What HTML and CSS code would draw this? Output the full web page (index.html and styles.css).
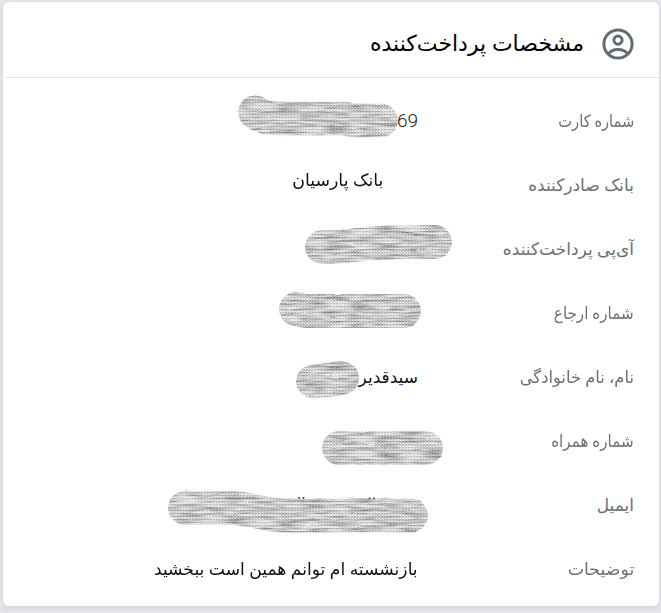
FILE: index.html
```html
<!DOCTYPE html>
<html lang="fa" dir="rtl">
<head>
    <meta charset="UTF-8">
    <title>مشخصات پرداخت‌کننده</title>
    <link rel="stylesheet" href="styles.css">
</head>
<body>
    <svg class="defs" width="0" height="0">
        <defs>
            <pattern id="dots" width="3" height="3" patternUnits="userSpaceOnUse">
                <rect width="3" height="3" fill="#d2d2d2"/>
                <rect width="2" height="1" fill="#a2a2a2"/>
                <rect x="1" y="2" width="1" height="1" fill="#f8f8f8"/>
            </pattern>
            <filter id="scratch" filterUnits="userSpaceOnUse" x="110" y="80" width="360" height="520" color-interpolation-filters="sRGB">
                <feTurbulence type="fractalNoise" baseFrequency="0.04 0.35" numOctaves="3" seed="4" result="noise"/>
                <feColorMatrix in="noise" type="matrix" values="2 0 0 0 -0.25  2 0 0 0 -0.25  2 0 0 0 -0.25  0 0 0 0 1" result="gray"/>
                <feDisplacementMap in="SourceGraphic" in2="noise" scale="2" xChannelSelector="R" yChannelSelector="G" result="rough"/>
                <feComposite in="rough" in2="gray" operator="arithmetic" k1="0" k2="0.7" k3="0.3" k4="0" result="mix"/>
                <feComposite in="mix" in2="rough" operator="in"/>
            </filter>
        </defs>
    </svg>

    <div class="card">
        <div class="card-header">
            <svg class="user-icon" viewBox="0 0 32 32">
                <circle cx="16" cy="16" r="14.1"/>
                <circle cx="16" cy="12.1" r="4.1"/>
                <path d="M6.2 26 C10.5 20 21.5 20 25.8 26"/>
            </svg>
            <h2>مشخصات پرداخت‌کننده</h2>
        </div>
        <div class="rows">
            <div class="row">
                <div class="label"><span class="narrow">شماره کارت</span></div>
                <div class="value">
                    <span class="digits">69</span>
                    <svg class="scribble" viewBox="118 89 340 64"><path d="M255 112 C263 119 272 118.500 287 118.500 H345 L352 120.500 H381"/></svg>
                </div>
            </div>
            <div class="row">
                <div class="label"><span>بانک صادرکننده</span></div>
                <div class="value bank"><span class="wide">بانک پارسیان</span></div>
            </div>
            <div class="row">
                <div class="label"><span>آی‌پی پرداخت‌کننده</span></div>
                <div class="value">
                    <svg class="scribble" viewBox="118 217 340 64"><path d="M322 247 C345 248 365 242.500 390 242.500 L435 242"/></svg>
                </div>
            </div>
            <div class="row">
                <div class="label"><span class="narrow mid">شماره ارجاع</span></div>
                <div class="value">
                    <svg class="scribble" viewBox="118 281 340 64"><path d="M296 309 L305 311 H404"/></svg>
                </div>
            </div>
            <div class="row">
                <div class="label"><span class="slim">نام، نام خانوادگی</span></div>
                <div class="value">
                    <span>سیدقدیر</span>
                    <svg class="scribble" viewBox="118 345 340 64"><path d="M313 381.500 L342 378"/></svg>
                </div>
            </div>
            <div class="row">
                <div class="label"><span class="narrow mid">شماره همراه</span></div>
                <div class="value">
                    <svg class="scribble" viewBox="118 409 340 64"><path d="M339 448 H426"/></svg>
                </div>
            </div>
            <div class="row">
                <div class="label"><span>ایمیل</span></div>
                <div class="value">
                    <svg class="scribble" viewBox="118 473 340 64">
                        <g class="specks">
                            <circle cx="299" cy="498" r="1"/>
                            <circle cx="303.500" cy="498" r="1"/>
                            <circle cx="369.500" cy="498.500" r="1"/>
                            <circle cx="374" cy="498.500" r="1"/>
                        </g>
                        <path d="M185 508 H233 C250 509 264 514 280 515.500 H411"/>
                    </svg>
                </div>
            </div>
            <div class="row">
                <div class="label"><span class="wide">توضیحات</span></div>
                <div class="value"><span class="wide-sm">بازنشسته ام توانم همین است ببخشید</span></div>
            </div>
        </div>
    </div>
</body>
</html>
```
FILE: styles.css
```css
* {
    box-sizing: border-box;
}
body {
    margin: 0;
    padding: 2px 2px 0 3px;
    height: 613px;
    overflow: hidden;
    background: #e4e6ea;
    font-family: 'Noto Sans', 'DejaVu Sans', sans-serif;
    color: #111;
}
.defs {
    position: absolute;
}
.card {
    height: 604px;
    background: #fff;
    border-radius: 6px;
    box-shadow: 0 2px 5px rgba(90, 95, 110, 0.15);
}
.card-header {
    display: flex;
    align-items: center;
    height: 76px;
    padding: 8px 25px 0 0;
    margin-left: 3px;
    border-bottom: 1px solid #dfe2e4;
}
.user-icon {
    width: 32px;
    height: 32px;
    fill: none;
    stroke: #626d72;
    stroke-width: 3;
}
h2 {
    margin: 0 18px 4px 0;
    font-size: 22px;
    font-weight: normal;
    line-height: 30px;
    color: #000;
}
.rows {
    padding: 11px 25px 0 0;
}
.row {
    display: flex;
    height: 64px;
    align-items: center;
    font-size: 17px;
    line-height: 24px;
    white-space: nowrap;
}
.row span {
    display: inline-block;
    transform-origin: right center;
}
.label {
    width: 216px;
    color: #6a7074;
}
.value {
    position: relative;
    display: flex;
    align-items: center;
    width: 300px;
    height: 64px;
}
.bank {
    padding: 0 35px 10px 0;
}
.row .narrow {
    transform: scaleX(0.86);
}
.row .mid {
    transform: scaleX(0.89);
}
.row .slim {
    transform: scaleX(0.96);
}
.row .wide {
    transform: scaleX(1.02);
}
.row .wide-sm {
    transform: scaleX(1.008);
}
.digits {
    font-family: Roboto, sans-serif;
    font-weight: 300;
    font-size: 19px;
    color: #222;
}
/* starts at the right edge of the value column and may run past it */
.scribble {
    position: absolute;
    top: 0;
    left: 0;
    width: 340px;
    height: 64px;
    fill: none;
    overflow: visible;
}
.scribble path {
    stroke: url(#dots);
    stroke-width: 34;
    stroke-linecap: round;
    stroke-linejoin: round;
    filter: url(#scratch);
}
.specks {
    fill: #222;
}
```
